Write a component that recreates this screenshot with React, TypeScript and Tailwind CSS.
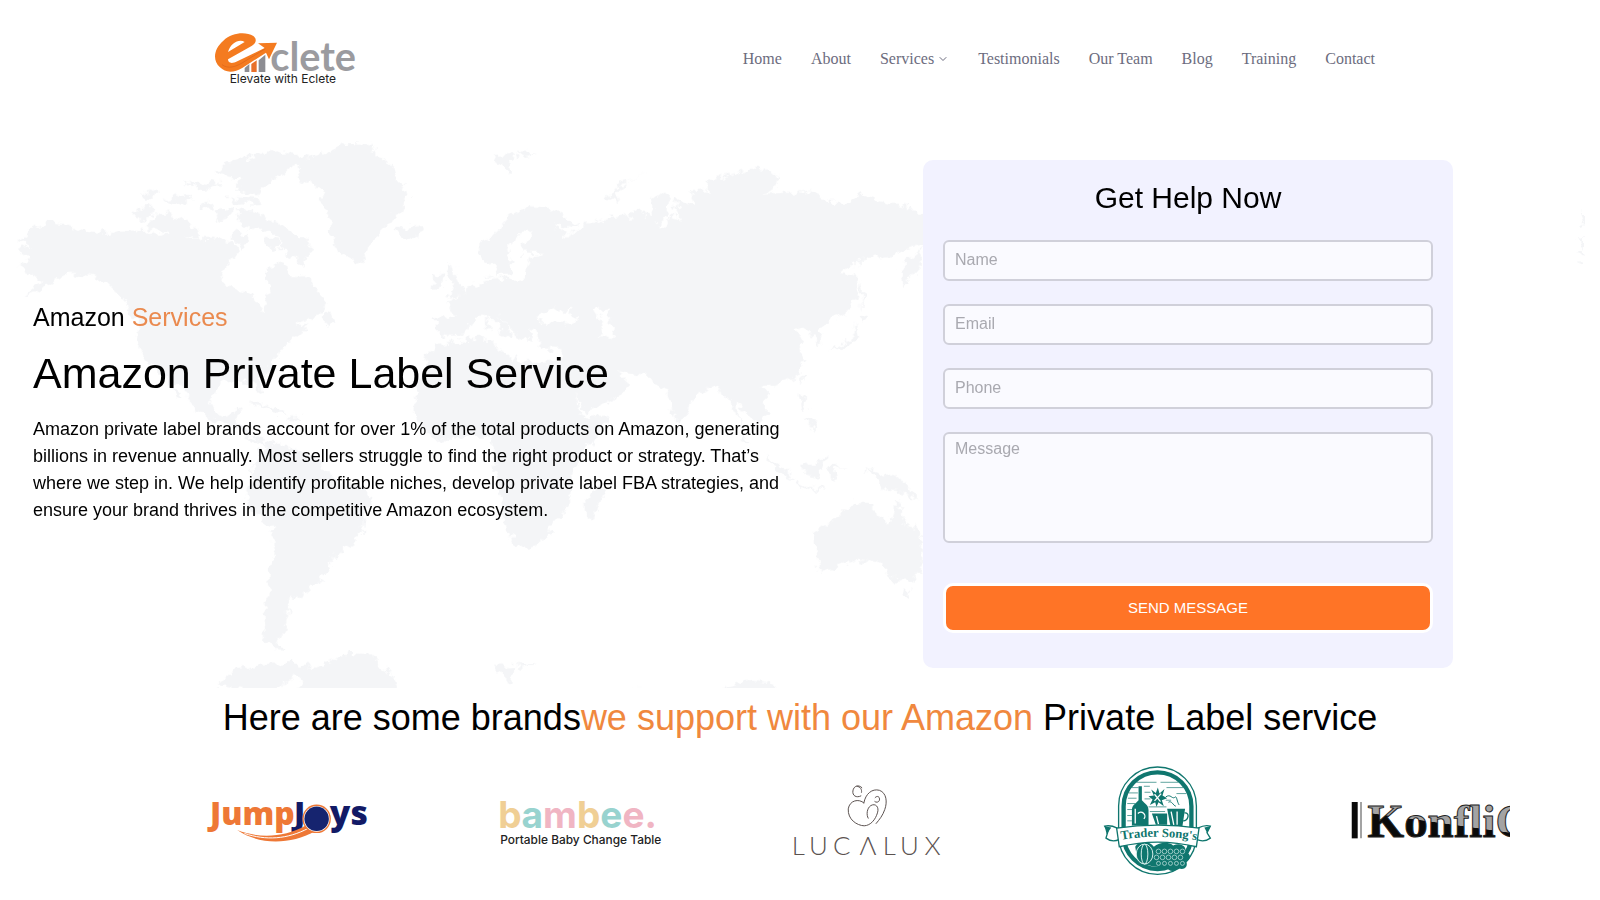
import { ChevronDown } from "lucide-react";

const NAV_ITEMS = ["Home", "About", "Services", "Testimonials", "Our Team", "Blog", "Training", "Contact"];

const FIELDS = [
  { id: "name", label: "Name", type: "text" },
  { id: "email", label: "Email", type: "email" },
  { id: "phone", label: "Phone", type: "tel" },
];

const FIELD_CLASS =
  "block w-full rounded-md border-2 border-[#d0d0da] bg-[#fafaff] px-2.5 text-base text-gray-700 placeholder:text-[#a9a9b0] focus:outline-none";

function EcleteLogo() {
  return (
    <svg viewBox="42 39 432 156" className="h-[52px] w-36 overflow-visible" role="img" aria-label="Eclete">
      <path d="M134 156V144L148 132V156ZM176 156V121L196 104V156Z" fill="#8d8d92" />
      <path d="M154 156V132L170 121V156Z" fill="#e8702a" />
      <path
        d="M60 142C36 120 42 86 70 62C96 38 136 34 160 48C172 58 168 70 156 77L84 118C84 130 96 132 112 124L194 84L174 70L231 68L207 118L198 98L128 143C100 160 76 158 60 142ZM84 96L134 66C118 56 92 68 84 96Z"
        fill="#f47b20"
        fillRule="evenodd"
      />
      <path d="M66 134C84 148 108 140 126 129L196 86" fill="none" stroke="#d9631a" strokeWidth="2" />
      <text x="211" y="152" fontSize="119" fontWeight="700" fill="#9b9b9f" className="font-['Lato',sans-serif]">
        clete
      </text>
      <text x="89" y="189" fontSize="36" fill="#222" className="font-['Inter',sans-serif]">
        Elevate with Eclete
      </text>
    </svg>
  );
}

function Header() {
  return (
    <header className="mx-auto flex max-w-[1200px] items-center justify-between py-[33px] pr-[25px] pl-3.5">
      <a href="#">
        <EcleteLogo />
      </a>
      <nav className="flex flex-wrap gap-[29px] font-['Liberation_Serif',serif] text-base text-[#6c6c7e]">
        {NAV_ITEMS.map((item) => (
          <a key={item} href="#" className="flex items-center gap-[3px]">
            {item}
            {item === "Services" && <ChevronDown size={12} strokeWidth={2} />}
          </a>
        ))}
      </nav>
    </header>
  );
}

/** Faint world map tiled vertically behind the hero. */
function WorldMap() {
  return (
    <svg
      viewBox="48 30 4713 1644"
      preserveAspectRatio="xMinYMin slice"
      className="absolute inset-y-0 left-4 h-[548px] w-[1571px]"
      aria-hidden="true"
    >
      <defs>
        <filter id="coast" x="0" y="0" width="100%" height="100%" colorInterpolationFilters="sRGB">
          <feTurbulence type="fractalNoise" baseFrequency="0.035" numOctaves="3" seed="4" />
          <feDisplacementMap in="SourceGraphic" scale="44" xChannelSelector="R" yChannelSelector="G" />
        </filter>
        <g id="world">
          {/* North America */}
          <path d="M55 330L90 300L140 280L200 285L270 300L320 312L400 295L440 300L470 318L520 312L560 330L640 325L700 340L720 360L690 395L662 430L690 470L740 490L765 500L770 530L785 540L800 510L812 480L800 450L800 410L830 400L870 415L880 445L920 440L950 480L985 520L975 545L940 565L880 585L930 590L900 615L865 635L850 655L830 680L800 725L778 745L785 785L775 790L762 765L740 755L700 755L660 765L640 780L632 820L650 850L680 860L718 832L708 872L735 890L750 915L790 930L800 945L770 938L720 905L690 880L640 870L590 840L570 810L550 770L505 735L545 812L530 805L490 740L460 710L425 670L410 630L415 590L400 560L380 520L350 490L320 460L280 440L230 430L205 428L170 450L130 480L65 502L110 470L130 455L70 430L60 405L92 388L50 360L92 350Z" />
          {/* Arctic islands */}
          <path d="M650 130L690 95L780 75L870 66L935 78L880 110L850 130L800 160L770 195L700 180L730 150ZM405 240L450 225L478 243L430 275L402 270ZM440 290L485 248L545 265L590 300L600 325L540 325ZM700 240L760 240L800 265L850 290L890 320L940 350L905 405L880 380L845 365L850 330L800 300L735 290ZM680 200L770 205L780 222L700 225ZM420 195L470 178L480 190L435 208ZM485 212L560 192L585 210L520 222ZM545 152L620 165L650 150L660 165L610 182ZM600 225L640 215L645 232L605 240ZM640 245L690 235L695 255L655 270ZM695 305L745 310L730 350L695 330ZM790 320L845 330L835 360L795 350Z" />
          {/* Greenland, Iceland, Newfoundland, Caribbean */}
          <path d="M890 100L950 75L1000 60L1050 35L1110 40L1130 75L1180 100L1190 150L1225 195L1210 240L1170 270L1150 300L1120 320L1105 360L1090 400L1060 390L1020 370L1000 340L985 300L990 260L970 240L970 200L950 170L890 145L910 120ZM1182 297L1220 292L1260 288L1272 305L1235 328L1195 316ZM965 565L985 545L1012 580L985 585ZM750 822L770 815L865 852L820 850L790 830ZM860 860L900 858L905 868L865 872Z" />
          {/* South America */}
          <path d="M780 970L800 935L870 950L920 970L970 1000L985 1035L1040 1055L1090 1080L1120 1105L1090 1160L1085 1210L1060 1240L1005 1270L990 1320L950 1355L925 1355L932 1385L895 1400L865 1410L865 1450L855 1490L845 1520L830 1540L860 1560L820 1557L795 1530L790 1460L805 1400L810 1330L820 1270L820 1200L780 1175L750 1130L735 1095L760 1050L755 1020Z" />
          {/* Africa, Madagascar */}
          <path d="M1310 640L1280 680L1270 720L1245 780L1240 850L1270 895L1310 930L1400 920L1465 920L1480 990L1500 1070L1510 1160L1540 1240L1550 1253L1610 1245L1650 1210L1665 1170L1710 1120L1712 1040L1760 960L1820 870L1822 855L1750 862L1715 780L1680 695L1560 700L1520 670L1480 650L1480 630L1400 625L1330 640ZM1755 1110L1800 1060L1812 1080L1785 1165L1760 1170Z" />
          {/* British Isles */}
          <path d="M1340 400L1365 408L1368 440L1395 485L1380 498L1345 502L1362 465L1345 445ZM1305 440L1335 435L1330 470L1300 474Z" />
          <g transform="translate(1380 0)">
            {/* Eurasia */}
            <path d="M50 350L90 320L120 290L160 250L210 228L265 235L320 260L355 280L340 292L285 290L320 320L380 290L375 262L395 280L450 260L520 255L520 240L560 250L585 255L575 210L600 190L630 195L620 230L630 258L592 288L622 290L640 250L662 270L640 205L705 225L685 180L740 178L740 155L800 140L870 115L920 122L960 140L950 170L905 187L1000 185L1070 180L1090 215L1180 215L1200 195L1260 210L1340 225L1350 240L1390 243L1460 260L1460 330L1390 345L1350 355L1300 375L1240 380L1190 395L1145 435L1190 440L1195 490L1160 545L1100 580L1070 600L1090 635L1072 640L1050 610L1035 590L1000 605L1030 622L1018 655L1030 700L1000 745L940 765L900 770L920 810L925 850L890 882L860 850L838 815L832 860L855 910L875 940L850 925L820 830L800 810L770 760L740 780L690 820L680 860L655 888L630 820L620 780L590 765L570 738L500 730L460 722L425 690L480 735L510 760L490 790L430 820L375 845L340 790L310 740L300 690L305 658L240 650L230 600L205 592L215 630L190 625L150 600L110 545L155 615L150 625L90 560L40 570L10 610L-20 620L-70 615L-70 562L-10 560L-40 515L0 495L30 475L60 455L110 450L80 440L85 400L65 390Z" />
            <path
              className="fill-white"
              d="M80 405L105 400L112 438L150 432L160 395L150 350L165 320L200 298L218 305L185 345L190 370L258 372L210 385L195 440L110 448L80 435ZM240 582L260 540L290 530L300 545L330 525L325 548L355 572L340 585L280 580ZM402 545L450 525L435 560L465 590L458 628L420 618L430 585Z"
            />
            {/* Arctic and Pacific islands */}
            <path d="M440 210L480 160L585 125L500 155L470 190L480 222ZM95 75L165 72L150 125ZM168 66L235 70L190 80ZM1318 415L1345 395L1392 350L1380 410L1328 475ZM1200 450L1212 500L1205 540ZM1198 550L1228 560L1200 580ZM1190 585L1198 625L1150 650L1105 670L1140 640L1175 630ZM75 570L85 565L85 600L78 602ZM1020 740L1030 740L1022 765ZM1015 790L1030 800L1040 835L1020 820ZM1035 870L1070 875L1060 900ZM912 970L950 995L990 1030L1000 1050L960 1030ZM1025 1005L1060 1005L1100 975L1090 1010L1070 1042L1035 1030ZM1000 1060L1090 1078L1090 1085L1010 1070ZM1110 1010L1160 1005L1125 1020L1130 1050L1112 1045ZM1212 1020L1245 1025L1300 1042L1345 1065L1372 1105L1330 1085L1280 1080L1250 1045Z" />
            {/* Australia */}
            <path d="M1055 1210L1120 1170L1150 1145L1180 1120L1240 1118L1240 1155L1290 1180L1308 1110L1330 1160L1350 1185L1388 1230L1390 1290L1360 1350L1310 1355L1280 1320L1250 1300L1200 1285L1140 1310L1080 1325L1070 1270ZM1322 1378L1352 1380L1340 1405Z" />
          </g>
          {/* Tip of the next tile to the east */}
          <path d="M4735 280L4755 250L4755 290ZM4725 330L4755 322L4755 345ZM4728 365L4750 355L4755 375ZM4732 395L4752 395L4748 405Z" />
        </g>
      </defs>
      <g fill="#f4f5f7" filter="url(#coast)">
        <use href="#world" />
        <use href="#world" y="1533" />
      </g>
    </svg>
  );
}

function ContactForm() {
  return (
    <form className="w-[530px] shrink-0 rounded-[10px] bg-[#f2f2ff] px-5 pt-4 pb-[35px]" onSubmit={(e) => e.preventDefault()}>
      <h2 className="mb-5 text-center text-[30px] leading-[44px]">Get Help Now</h2>
      {FIELDS.map(({ id, label, type }) => (
        <div key={id} className="mb-[23px]">
          <input id={id} type={type} placeholder={label} aria-label={label} className={`${FIELD_CLASS} h-[41px] pb-0.5`} />
        </div>
      ))}
      <textarea id="message" placeholder="Message" aria-label="Message" className={`${FIELD_CLASS} mb-10 h-[111px] resize-none py-[3px]`} />
      <button type="submit" className="h-[50px] w-full rounded-[10px] border-3 border-white bg-[#ff7426] text-[15px] text-white">
        SEND MESSAGE
      </button>
    </form>
  );
}

function Hero() {
  return (
    <section className="relative mt-[22px] overflow-hidden">
      <WorldMap />
      <div className="relative flex items-center justify-between gap-10 py-5 pr-[147px] pl-[33px]">
        <div className="max-w-[760px]">
          <p className="mb-[21px] text-[25px] leading-[25px]">
            Amazon <span className="text-[#ea8a4f]">Services</span>
          </p>
          <h1 className="mb-[21px] text-[43px] leading-[44px]">Amazon Private Label Service</h1>
          <p className="text-lg leading-[27px]">
            Amazon private label brands account for over 1% of the total products on Amazon, generating billions in revenue
            annually. Most sellers struggle to find the right product or strategy. That’s where we step in. We help identify
            profitable niches, develop private label FBA strategies, and ensure your brand thrives in the competitive Amazon
            ecosystem.
          </p>
        </div>
        <ContactForm />
      </div>
    </section>
  );
}

function JumpJoysLogo() {
  return (
    <svg viewBox="45 52 490 145" className="h-12 w-[163px] overflow-visible" role="img" aria-label="JumpJoys">
      <g className="font-['Open_Sans',sans-serif]" fontSize="96" fontWeight="800">
        <text x="56" y="136" fill="#ee7836">
          Jump
        </text>
        <text x="310" y="136" fill="#121a66">
          J
        </text>
        <text x="418" y="136" fill="#121a66" fontSize="102">
          ys
        </text>
      </g>
      <path d="M138 152C205 178 280 174 345 138L372 156C300 196 205 198 138 152Z" fill="#ee7836" />
      <path d="M160 162C225 184 290 180 354 146" fill="none" stroke="#fff" strokeWidth="3" />
      <circle cx="378" cy="118" r="43" fill="#ee7836" />
      <circle cx="378" cy="118" r="39" fill="#fff" />
      <circle cx="378" cy="118" r="37" fill="#16246f" />
    </svg>
  );
}

function BambeeLogo() {
  return (
    <svg viewBox="905 52 510 145" className="h-12 w-[170px] overflow-visible" role="img" aria-label="bambee. Portable Baby Change Table">
      <text x="922" y="146" fontSize="112" fontWeight="700" className="font-['Inter',sans-serif]">
        <tspan fill="#f0cf95">b</tspan>
        <tspan fill="#98d3cf">a</tspan>
        <tspan fill="#f0b5c3">m</tspan>
        <tspan fill="#f0cf95">b</tspan>
        <tspan fill="#98d3cf">e</tspan>
        <tspan fill="#f0b5c3">e.</tspan>
      </text>
      <text x="928" y="195" fontSize="36" fontWeight="500" fill="#222" className="font-['Inter',sans-serif]">
        Portable Baby Change Table
      </text>
    </svg>
  );
}

function LucaluxLogo() {
  return (
    <svg viewBox="65 98 455 226" className="h-[75px] w-[152px] overflow-visible" role="img" aria-label="LUCALUX">
      <g fill="none" stroke="#5b5250" strokeWidth="3" strokeLinecap="round">
        <path d="M277 112C268 102 252 106 250 122C248 136 260 144 274 137" />
        <path d="M262 108C272 108 278 118 276 126" />
        <path d="M283 158C268 144 240 150 236 176C234 208 262 226 284 227C304 226 318 208 324 188C330 170 318 158 304 166C292 174 290 194 296 204" />
        <path d="M283 158C288 130 308 114 330 120C352 128 354 156 346 178C340 196 330 208 320 220" />
        <path d="M317 142C324 134 332 140 330 150C328 156 320 158 316 154" />
      </g>
      <text
        x="66 118 190 270 340 392 466"
        y="314"
        fontSize="78"
        fontWeight="300"
        fill="#5b5250"
        className="font-['Lato',sans-serif]"
      >
        LUCΛLUX
      </text>
    </svg>
  );
}

function TraderSongsLogo() {
  return (
    <svg viewBox="1000 44 326 334" className="h-[111px] w-[109px]" role="img" aria-label="Trader Song's">
      <g fill="none" stroke="#0f766e">
        <rect x="1046" y="50" width="234" height="323" rx="117" fill="#fff" strokeWidth="4" />
        <rect x="1061" y="66" width="204" height="291" rx="102" strokeWidth="13" />
        <path
          d="M1100 96H1160M1172 96H1226M1085 112H1106M1122 108H1140M1190 112H1240M1076 128H1104M1124 126H1142M1220 130H1250M1074 144H1100M1124 146H1142M1188 150H1204M1072 160H1096M1136 170H1190M1072 178H1088M1140 184H1186M1072 196H1086M1072 212H1086"
          strokeWidth="2"
        />
        <path d="M1188 140C1202 130 1206 146 1214 142C1222 134 1220 152 1228 164M1196 156C1206 150 1210 166 1218 168" strokeWidth="3" />
      </g>
      <g fill="#0f766e">
        <path d="M1106 108H1116V150C1126 162 1136 164 1136 180V226H1086V180C1086 164 1096 162 1106 150Z" />
        <path d="M1164 112L1169 130L1184 116L1178 136L1192 144L1176 150L1182 168L1166 156L1160 170L1156 156L1140 164L1148 148L1136 138L1152 136L1144 118L1158 128Z" />
        <path d="M1146 190H1192V224H1158ZM1192 176H1246L1238 228H1202Z" />
      </g>
      <g fill="none" stroke="#fff" strokeWidth="4">
        <path d="M1096 176V220M1104 190A9 9 0 0 1 1122 206M1160 198L1166 222M1204 184L1212 224M1222 184V224M1154 132L1172 154M1174 130L1154 152" />
      </g>
      <path d="M1244 188C1262 186 1256 212 1240 212" fill="none" stroke="#0f766e" strokeWidth="4" />
      <path d="M1096 290C1104 272 1140 270 1152 290C1170 274 1200 276 1210 286C1234 276 1252 290 1246 306C1268 312 1262 330 1250 336C1256 352 1240 362 1226 354C1210 370 1196 362 1190 352C1160 350 1120 350 1102 326Z" fill="#0f766e" />
      <g fill="none" stroke="#d8efec" strokeWidth="3">
        <ellipse cx="1124" cy="312" rx="25" ry="30" />
        <ellipse cx="1124" cy="312" rx="10" ry="30" />
        {[1166, 1184, 1202, 1220, 1238].map((x) => (
          <g key={x} strokeWidth="2">
            <circle cx={x} cy="304" r="7" />
            <circle cx={x - 6} cy="322" r="7" />
            <circle cx={x} cy="340" r="6" />
          </g>
        ))}
      </g>
      <path d="M1042 234C1022 224 1012 226 1004 228L1014 244L1008 264C1024 276 1036 274 1048 268ZM1284 234C1304 224 1316 226 1322 228L1312 248L1322 264C1306 276 1294 274 1280 268Z" fill="#fff" stroke="#0f766e" strokeWidth="4" />
      <path d="M1004 228L1024 232L1010 252ZM1322 228L1304 232L1312 248Z" fill="#0f766e" />
      <path d="M1040 234Q1163 216 1288 234L1280 290Q1163 262 1048 290Z" fill="#fff" stroke="#0f766e" strokeWidth="4" />
      <path id="ribbon" d="M1054 269Q1163 250 1290 272" fill="none" />
      <text fontSize="38" fontWeight="700" fill="#0f766e" className="font-['Liberation_Serif',serif]">
        <textPath href="#ribbon">Trader Song's</textPath>
      </text>
    </svg>
  );
}

function KonflictLogo() {
  return (
    <svg viewBox="63 55 582 130" className="h-[43px] w-[194px] overflow-visible" role="img" aria-label="Konflict">
      <defs>
        <linearGradient id="ink" gradientUnits="userSpaceOnUse" x1="337" y1="25" x2="309" y2="225">
          <stop offset="0.5" stopColor="#a3a3a3" />
          <stop offset="0.51" stopColor="#0a0a0a" />
        </linearGradient>
      </defs>
      <path d="M66 64H84V174H66Z" fill="#0a0a0a" />
      <path d="M91 64H97V174H91Z" fill="#a3a3a3" />
      <text
        x="114"
        y="169"
        fontSize="142"
        fontWeight="700"
        fill="url(#ink)"
        stroke="#222"
        strokeWidth="3"
        className="font-['Liberation_Serif',serif]"
      >
        KonfliCt
      </text>
    </svg>
  );
}

const BRAND_LOGOS = [JumpJoysLogo, BambeeLogo, LucaluxLogo, TraderSongsLogo, KonflictLogo];

function Brands() {
  return (
    <section>
      <h2 className="mb-0.5 pt-1 text-center text-[36px] leading-[52px]">
        Here are some brands<span className="text-[#f0883e]">we support with our Amazon</span> Private Label service
      </h2>
      <div className="mx-auto flex max-w-[1420px] items-center overflow-hidden py-[19px] pl-[52px]">
        {BRAND_LOGOS.map((Logo, i) => (
          <div key={i} className="flex w-[290px] shrink-0 justify-center">
            <Logo />
          </div>
        ))}
      </div>
    </section>
  );
}

export default function App() {
  return (
    <div className="bg-white font-['Liberation_Sans',Arial,sans-serif] text-black">
      <Header />
      <main>
        <Hero />
        <Brands />
      </main>
    </div>
  );
}
